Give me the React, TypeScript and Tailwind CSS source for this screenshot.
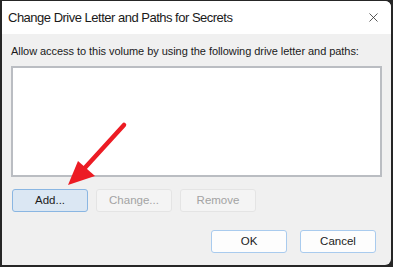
import { X } from "lucide-react";

const font = { fontFamily: '"Segoe UI", "Liberation Sans", Arial, sans-serif' };

function Btn({ label, variant }: { label: string; variant: "focus" | "default" | "disabled" }) {
  const cls =
    variant === "focus"
      ? "bg-[#dbe7f3] border-[#8ab6e2] text-[#1b1b1b]"
      : variant === "default"
      ? "bg-[#fdfdfd] border-[#a9cbee] text-[#1b1b1b]"
      : "bg-[#f4f4f4] border-[#e4e4e4] text-[#a3a3a3]";
  return (
    <button className={`flex h-[23px] w-[76px] items-center justify-center rounded-[3px] border text-[11.5px] ${cls}`}>
      {label}
    </button>
  );
}

export default function App() {
  return (
    <div className="h-[267px] w-[393px] bg-[#262626] pt-[1px] pl-[2px] pr-[2px] pb-[2px]" style={font}>
      <div className="relative flex h-[264px] flex-col overflow-hidden rounded-br-[6px] rounded-tr-[6px] bg-[#f0f0f0]">
        {/* Title bar */}
        <div className="flex h-[33px] shrink-0 items-center justify-between bg-white pl-[6px] pr-[10px]">
          <span className="text-[13px] tracking-[-0.5px] text-[#1a1a1a]">Change Drive Letter and Paths for Secrets</span>
          <X className="h-[15px] w-[15px] text-[#333]" strokeWidth={1.3} />
        </div>

        {/* Body */}
        <div className="flex flex-1 flex-col px-[9px]">
          <p className="mt-[9px] whitespace-nowrap text-[11px] leading-[16px] tracking-[-0.05px] text-[#1a1a1a]">
            Allow access to this volume by using the following drive letter and paths:
          </p>
          <div className="mt-[7px] h-[111px] w-[371px] border-2 border-[#babdc2] bg-white" />
          <div className="mt-[12px] flex gap-[8px] pl-[1px]">
            <Btn label="Add..." variant="focus" />
            <Btn label="Change..." variant="disabled" />
            <Btn label="Remove" variant="disabled" />
          </div>
          <div className="mt-[18px] flex justify-end gap-[13px] pr-[6px]">
            <Btn label="OK" variant="default" />
            <Btn label="Cancel" variant="default" />
          </div>
        </div>

        {/* Annotation arrow */}
        <svg className="pointer-events-none absolute left-0 top-0" width="389" height="264" viewBox="0 0 389 264">
          <line x1="122" y1="124" x2="80" y2="170" stroke="#ec1c24" strokeWidth="4.5" strokeLinecap="round" />
          <polygon points="66,184 76,160 93,175" fill="#ec1c24" />
        </svg>
      </div>
    </div>
  );
}
